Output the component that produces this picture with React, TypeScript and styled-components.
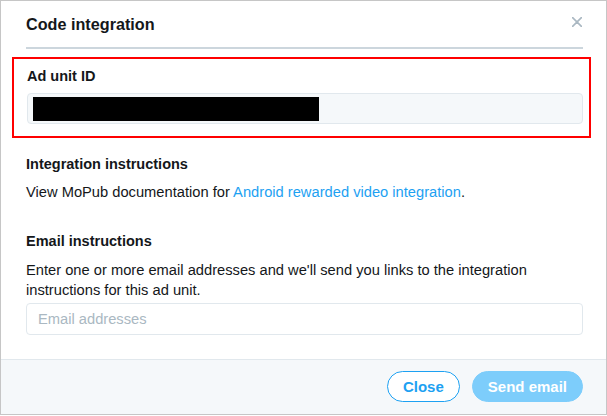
import React from "react";
import styled, { createGlobalStyle } from "styled-components";

const Global = createGlobalStyle`
  html, body { margin: 0; padding: 0; background: #ffffff; }
  * { box-sizing: border-box; }
  body { font-family: "Liberation Sans", Arial, sans-serif; color: #14171a; }
`;

const Frame = styled.div`
  width: 607px;
  height: 415px;
  border: 1px solid #c6c6c6;
  display: flex;
  flex-direction: column;
  background: #ffffff;
`;

const Header = styled.div`
  padding: 13px 23px 0 25px;
`;

const TitleRow = styled.div`
  display: flex;
  justify-content: space-between;
  align-items: flex-start;
`;

const Title = styled.h1`
  margin: 0;
  font-size: 16.2px;
  line-height: 20px;
  font-weight: 700;
  color: #14171a;
`;

const CloseIcon = styled.button`
  border: 0;
  background: transparent;
  padding: 0;
  margin: 3px 1px 0 0;
  width: 10px;
  height: 10px;
  display: flex;
  cursor: pointer;
`;

const Divider = styled.div`
  margin-top: 13px;
  height: 2px;
  background: #ccd6dd;
`;

const Body = styled.div`
  flex: 1;
  padding: 8px 23px 0 25px;
  display: flex;
  flex-direction: column;
`;

const Highlight = styled.section`
  margin: 0 -8px 0 -14px;
  border: 2px solid #ff0000;
  padding: 8px 6px 12px 13px;
`;

const Section = styled.section<{ $top: number }>`
  margin-top: ${(p) => p.$top}px;
`;

const Label = styled.h2`
  margin: 0;
  font-size: 14.5px;
  line-height: 18px;
  font-weight: 700;
  color: #14171a;
`;

const Text = styled.p<{ $top: number }>`
  margin: ${(p) => p.$top}px 0 0 0;
  font-size: 14.7px;
  line-height: 20px;
  color: #14171a;
`;

const Link = styled.a`
  color: #1da1f2;
  text-decoration: none;
`;

const ReadOnlyField = styled.div`
  margin-top: 8px;
  height: 31px;
  border: 1px solid #e1e8ed;
  border-radius: 4px;
  background: #f5f8fa;
  padding: 2px 5px;
  display: flex;
  align-items: center;
`;

const Redaction = styled.span<{ $w: number }>`
  display: block;
  width: ${(p) => p.$w}px;
  height: 24px;
  background: #000000;
`;

const Input = styled.input`
  display: block;
  width: 100%;
  margin-top: 3px;
  height: 32px;
  border: 1px solid #e1e8ed;
  border-radius: 4px;
  background: #ffffff;
  padding: 0 11px;
  font-family: "Liberation Sans", Arial, sans-serif;
  font-size: 14.7px;
  color: #14171a;
  outline: none;
  &::placeholder { color: #aab8c2; }
`;

const Footer = styled.div`
  height: 55px;
  border-top: 1px solid #e1e8ed;
  background: #f5f8fa;
  display: flex;
  justify-content: flex-end;
  align-items: center;
  gap: 12px;
  padding: 0 23px 1px 0;
`;

const Button = styled.button<{ $primary?: boolean }>`
  height: 31px;
  padding: 0 15px;
  border-radius: 100px;
  border: 1px solid ${(p) => (p.$primary ? "#7dcdfb" : "#1da1f2")};
  background: ${(p) => (p.$primary ? "#7dcdfb" : "#ffffff")};
  color: ${(p) => (p.$primary ? "#ffffff" : "#1da1f2")};
  font-family: "Liberation Sans", Arial, sans-serif;
  font-size: 15px;
  font-weight: 700;
  cursor: pointer;
`;

export default function App() {
  return (
    <>
      <Global />
      <Frame>
        <Header>
          <TitleRow>
            <Title>Code integration</Title>
            <CloseIcon aria-label="Close">
              <svg width="10" height="10" viewBox="0 0 10 10">
                <path d="M0.6 0.6 L9.4 9.4 M9.4 0.6 L0.6 9.4" stroke="#aab8c2" strokeWidth="1.6" strokeLinecap="round" />
              </svg>
            </CloseIcon>
          </TitleRow>
          <Divider />
        </Header>
        <Body>
          <Highlight>
            <Label>Ad unit ID</Label>
            <ReadOnlyField>
              <Redaction $w={286} />
            </ReadOnlyField>
          </Highlight>
          <Section $top={17}>
            <Label>Integration instructions</Label>
            <Text $top={9}>
              View MoPub documentation for <Link href="#">Android rewarded video integration</Link>.
            </Text>
          </Section>
          <Section $top={30}>
            <Label>Email instructions</Label>
            <Text $top={10}>
              Enter one or more email addresses and we'll send you links to the integration
              <br />
              instructions for this ad unit.
            </Text>
            <Input placeholder="Email addresses" />
          </Section>
        </Body>
        <Footer>
          <Button>Close</Button>
          <Button $primary>Send email</Button>
        </Footer>
      </Frame>
    </>
  );
}
